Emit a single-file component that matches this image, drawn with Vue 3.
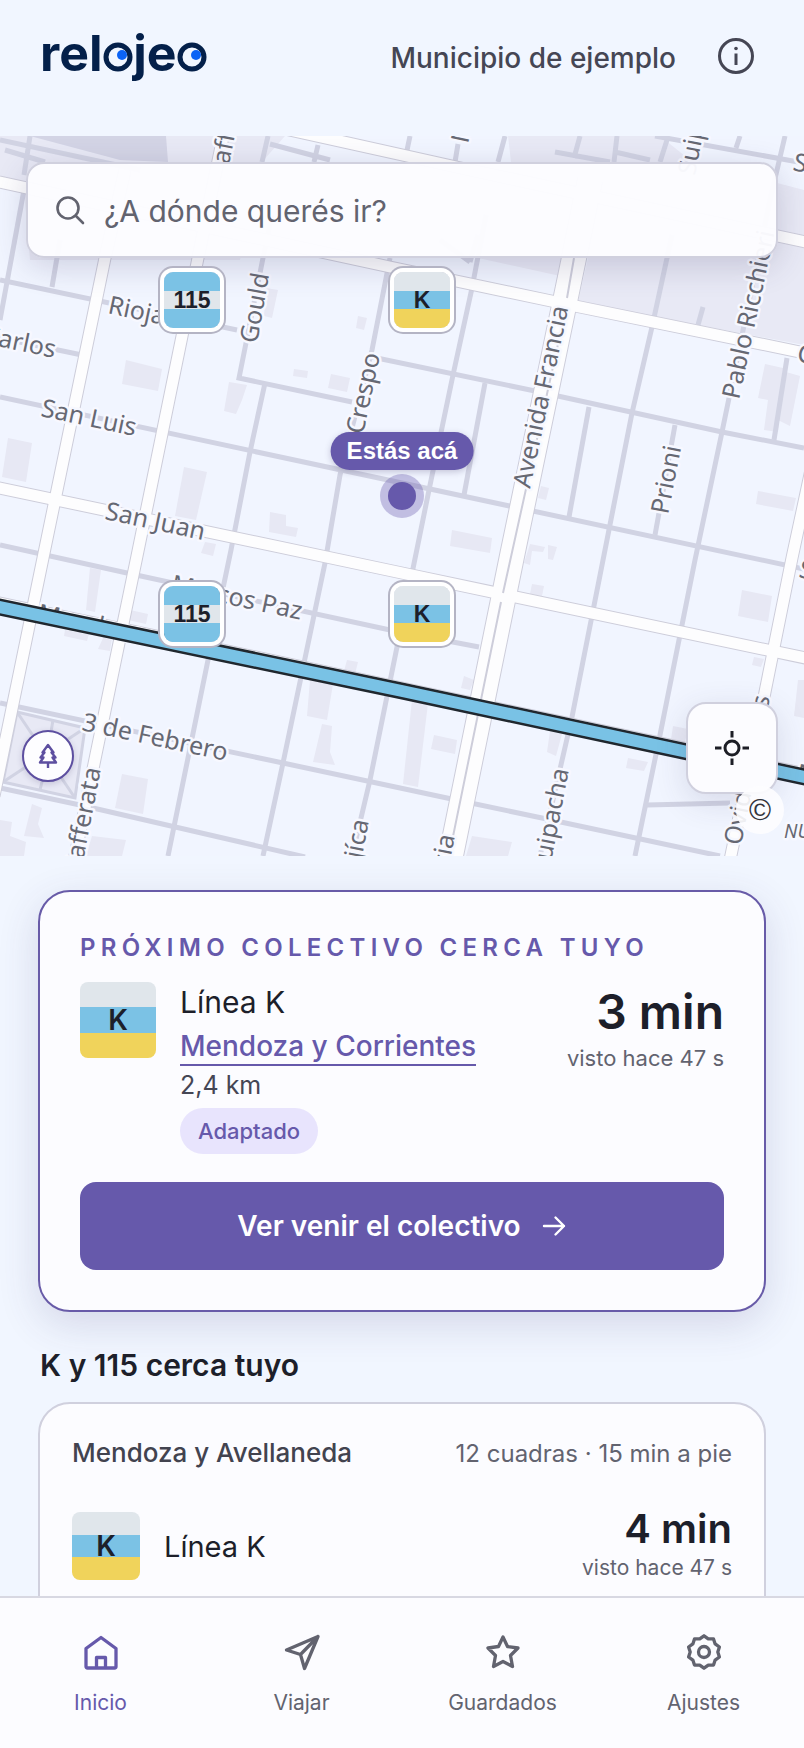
<template>
  <div class="app-shell">
    <main class="content">
      <header class="top-bar">
        <svg class="logo" viewBox="0 0 180 64" role="img" aria-label="relojeo">
          <text x="0" y="47" class="logo-text">relojeo</text>
          <g fill="#f1f6ff" stroke="#04204a" stroke-width="5">
            <circle cx="78" cy="33" r="12" />
            <circle cx="152" cy="33" r="12" />
          </g>
          <circle cx="82" cy="31" r="5" fill="#0b63f6" />
          <circle cx="156" cy="31" r="5" fill="#0b63f6" />
        </svg>
        <div class="top-right">
          <span class="city">Municipio de ejemplo</span>
          <button class="icon-button" aria-label="Información">
            <svg width="40" height="40" viewBox="0 0 40 40" fill="none" stroke="#454654">
              <circle cx="20" cy="20" r="16.500" stroke-width="3" />
              <path d="M20 17.500v11.500" stroke-width="3" />
              <circle cx="20" cy="12.500" r="1.800" fill="#454654" stroke="none" />
            </svg>
          </button>
        </div>
      </header>

      <section class="map">
        <svg class="map-canvas" viewBox="0 136 804 720" preserveAspectRatio="xMidYMid slice">
          <rect x="0" y="136" width="804" height="720" fill="#f1f5ff" />
          <path v-for="d in zones" :key="d" :d="d" fill="#e8e9f5" />
          <path d="M30 136L166 136L168 162L120 160Z" fill="#d3d4e5" />
          <path v-for="d in buildings" :key="d" :d="d" fill="#e7e8f4" />
          <path v-for="d in minorRoads" :key="d" :d="d" class="minor" />
          <path v-for="d in paths" :key="d" :d="d" class="footpath" />
          <path v-for="d in majorRoads" :key="'c' + d" :d="d" class="major-casing" />
          <path :d="avenue" class="avenue-casing" />
          <path v-for="d in majorRoads" :key="'f' + d" :d="d" class="major" />
          <path :d="avenue" class="avenue" />
          <path d="M574 258L567 298M566 308L503 593M501 602L449 856" class="median" />
          <text
            v-for="(s, i) in streets"
            :key="i"
            class="street"
            :class="{ area: s.area }"
            :text-anchor="s.end ? 'end' : 'start'"
            :transform="`translate(${s.x} ${s.y}) rotate(${s.a})`"
          >{{ s.name }}</text>
          <path d="M-10 605L402 691L814 779" stroke="#20272e" stroke-width="17" />
          <path d="M-10 605L402 691L814 779" stroke="#79c2e5" stroke-width="12" />
        </svg>

        <label class="search">
          <svg width="32" height="32" viewBox="0 0 32 32" fill="none" stroke="#62636f" stroke-width="2.600" stroke-linecap="round">
            <circle cx="12" cy="14" r="10.500" />
            <path d="M20 22l7 7" />
          </svg>
          <input type="text" v-model="query" placeholder="¿A dónde querés ir?" aria-label="Destino" />
        </label>

        <div v-for="(p, i) in pins" :key="i" class="pin" :class="'line-' + p.line" :style="place(p)">
          {{ p.line }}
        </div>
        <div class="here-label" :style="place({ x: 402, y: 315 })">Estás acá</div>
        <div class="here-dot" :style="place({ x: 402, y: 360 })"></div>
        <div class="park" :style="place({ x: 48, y: 620 })">
          <svg width="28" height="28" viewBox="0 0 28 28" fill="none" stroke="#5d4fa0" stroke-width="2.400" stroke-linejoin="round">
            <path d="M14 3L8.500 10.500H10.500L6.500 15.500H9.500L6 20.500H22L18.500 15.500H21.500L17.500 10.500H19.500Z" />
            <path d="M14 20.500V26" />
          </svg>
        </div>
        <button class="credits" aria-label="Créditos del mapa">©</button>
        <button class="locate" aria-label="Mi ubicación">
          <svg width="36" height="36" viewBox="0 0 36 36" fill="none" stroke="#1d1e26" stroke-width="3">
            <circle cx="18" cy="18" r="7" />
            <path d="M18 1v6.500M18 28.500v6.500M1 18h6.500M28.500 18h6.500" />
          </svg>
        </button>
      </section>

      <div class="cards">
        <article class="card next-card">
          <p class="eyebrow">PRÓXIMO COLECTIVO CERCA TUYO</p>
          <div class="next-row">
            <div class="badge badge-big line-K">K</div>
            <div class="next-info">
              <span class="line-name">Línea K</span>
              <a href="#" class="stop-link">Mendoza y Corrientes</a>
              <span class="distance">2,4 km</span>
              <span class="chip">Adaptado</span>
            </div>
            <div class="eta">
              <strong>3 min</strong>
              <span>visto hace 47 s</span>
            </div>
          </div>
          <button class="primary">
            Ver venir el colectivo
            <svg width="26" height="24" viewBox="0 0 26 24" fill="none" stroke="#fff" stroke-width="2.400" stroke-linecap="round" stroke-linejoin="round">
              <path d="M3 12h20M14.500 3.500L23 12l-8.500 8.500" />
            </svg>
          </button>
        </article>

        <h2>K y 115 cerca tuyo</h2>

        <article class="card stop-card">
          <div class="stop-head">
            <h3>Mendoza y Avellaneda</h3>
            <span>12 cuadras · 15 min a pie</span>
          </div>
          <div class="stop-row">
            <div class="badge line-K">K</div>
            <span class="stop-line">Línea K</span>
            <div class="eta eta-small">
              <strong>4 min</strong>
              <span>visto hace 47 s</span>
            </div>
          </div>
        </article>
      </div>
    </main>

    <nav class="tab-bar">
      <a v-for="t in tabs" :key="t.name" href="#" class="tab" :class="{ active: t.name === current }" @click.prevent="current = t.name">
        <svg width="40" height="40" viewBox="0 0 40 40" fill="none" stroke="currentColor" stroke-width="3.300" stroke-linejoin="round" stroke-linecap="round">
          <path :d="t.icon" />
        </svg>
        <span>{{ t.name }}</span>
      </a>
    </nav>
  </div>
</template>

<script setup>
import { ref } from "vue";

const query = ref("");
const current = ref("Inicio");

const pins = [
  { line: "115", x: 192, y: 164 },
  { line: "K", x: 422, y: 164 },
  { line: "115", x: 192, y: 478 },
  { line: "K", x: 422, y: 478 },
];

// the map is centred in its box, so pins are measured from the middle
const place = (p) => ({ left: `calc(50% + ${p.x - 402}px)`, top: `${p.y}px` });

// ten-toothed wheel around the hub of the settings icon
const gearPath = () => {
  const points = [];
  for (let i = 0; i < 20; i++) {
    const r = i % 2 ? 13.8 : 16.2;
    const a = (i * Math.PI) / 10 - Math.PI / 2;
    points.push(`${(20 + r * Math.cos(a)).toFixed(2)} ${(20 + r * Math.sin(a)).toFixed(2)}`);
  }
  return `M${points.join("L")}ZM25.5 20a5.5 5.5 0 1 1-11 0a5.5 5.5 0 1 1 11 0Z`;
};

const tabs = [
  { name: "Inicio", icon: "M5 16.500L20 5.500L35 16.500V34.500Q35 36 33.500 36H6.500Q5 36 5 34.500ZM15.500 36V25.500H24.500V36" },
  { name: "Viajar", icon: "M36 4.500L4.500 18L18.500 22.500L22.500 36.500ZM18.500 22.500L36 4.500" },
  { name: "Guardados", icon: "M20 5L24.500 14.500L35 16L27.500 23.500L29.500 34.500L20 29.500L10.500 34.500L12.500 23.500L5 16L15.500 14.500Z" },
  { name: "Ajustes", icon: gearPath() },
];

const zones = [
  "M0 136H285L262 162L240 260H30L24 190L0 175Z",
  "M390 235L478 258L560 276L572 215L400 180Z",
  "M508 136H660L690 160L804 190V345L578 302L588 258L520 240Z",
  "M17 712L85 728L75 798L3 782Z",
];

const buildings = [
  "M126 360L162 369L158 391L122 384Z",
  "M229 382L247 385L242 400L236 414L224 411Z",
  "M184 467L207 472L196 520L175 516Z",
  "M8 438L32 443L26 482L2 477Z",
  "M270 512L286 515L286 526L298 528L296 537L269 532Z",
  "M205 542L216 544L213 556L201 553Z",
  "M294 369L308 371L307 378L293 376Z",
  "M331 374L350 378L347 392L328 388Z",
  "M266 288L278 290L272 318L264 316Z",
  "M358 316L367 318L364 330L356 328Z",
  "M90 568L101 570L95 612L86 610Z",
  "M66 624L90 630L87 641L64 636Z",
  "M104 636L112 638L110 651L98 649Z",
  "M130 610L148 614L146 624L128 620Z",
  "M122 774L148 779L143 814L115 808Z",
  "M310 680L333 684L327 720L307 716Z",
  "M322 724L332 726L330 752L335 765L313 762Z",
  "M347 660L358 662L355 674L344 671Z",
  "M32 804L42 808L38 824L44 838L24 836Z",
  "M0 820L12 822L10 836L26 842L24 856H0Z",
  "M92 836L126 840L122 856H86Z",
  "M452 530L492 538L490 553L450 546Z",
  "M541 486L549 488L546 500L538 498Z",
  "M548 545L557 547L553 560L548 559ZM530 544L545 547L543 552L532 551L530 565L524 563Z",
  "M758 491L796 498L793 511L756 504Z",
  "M765 364L783 368L778 432L764 430L768 400L758 398Z",
  "M786 372L800 376L790 426L778 420Z",
  "M742 590L772 596L768 622L738 616Z",
  "M754 657L764 659L761 667L752 665Z",
  "M412 700L428 703L418 787L403 784Z",
  "M434 735L457 740L455 754L431 749Z",
  "M464 676L474 680L470 690L461 688Z",
  "M550 731L562 734L556 756L547 752Z",
  "M628 758L648 762L644 771L626 768Z",
  "M673 726L688 729L685 742L671 739Z",
  "M472 836L512 842L508 856H466Z",
  "M532 584L544 586L542 596L530 594Z",
  "M798 680L804 680V718L794 716Z",
];

const minorRoads = [
  "M0 280L237 330",
  "M0 338L82 355",
  "M0 397L402 483L804 569",
  "M272 215L263 258L239 378L352 402",
  "M265 383L250 452L231 550L208 660L168 856",
  "M390 258L372 350L340 475L325 563L283 763L263 856",
  "M486 215L472 288L453 375L429 490L397 647L370 780L352 856",
  "M372 357L535 391L722 432L804 448",
  "M485 383L464 495",
  "M589 407L569 517",
  "M672 235L652 327L632 413L605 550L572 717L540 856",
  "M785 136L770 200L722 432L695 560L660 735L635 856",
  "M675 425L655 535",
  "M787 358L774 440",
  "M0 545L127 573L390 630L479 647",
  "M0 703L283 763L447 798L542 818L720 856",
  "M0 788L80 805L305 857",
  "M647 805L730 803",
  "M24 190L0 320",
  "M60 240L52 287",
  "M703 307L698 325",
  "M0 140L140 170M30 136L24 175M5 150L45 162",
  "M268 136L262 162M270 144L330 160M318 145L314 162",
  "M410 136L406 155M505 136L498 162M458 144L455 162",
  "M580 136L574 158M617 136L614 162M555 152L610 162M615 152L650 160M667 140L660 162",
  "M655 136L804 163M740 136L736 148",
  "M440 240L470 262M470 262L478 235",
];

const paths = [
  "M17 712L85 728L75 798L3 782Z",
  "M17 712L75 798M85 728L3 782M53 720L48 750M40 790L46 765",
];

const majorRoads = [
  "M125 170L105 258L43 558L-6 796",
  "M224 132L198 258L137 556L70 880",
  "M812 465L792 558L763 702L730 860",
  "M240 119L470 170L810 243",
  "M-5 181L390 267L575 306L810 354",
  "M-5 487L402 573L810 659",
  "M-5 602L402 688L810 775",
];

const avenue = "M590 180L574 258L512 556L448 870";

const streets = [
  { name: "Rioja", x: 107, y: 313, a: 12 },
  { name: "Carlos", x: 54, y: 358, a: 12, end: true },
  { name: "San Luis", x: 40, y: 416, a: 12 },
  { name: "San Juan", x: 104, y: 519, a: 12 },
  { name: "Gould", x: 257, y: 344, a: -80 },
  { name: "Crespo", x: 363, y: 435, a: -78 },
  { name: "Avenida Francia", x: 530, y: 489, a: -78 },
  { name: "Pablo Ricchieri", x: 739, y: 400, a: -78 },
  { name: "Prioni", x: 668, y: 515, a: -79 },
  { name: "Marcos Paz", x: 170, y: 592, a: 12 },
  { name: "Mendoza", x: 36, y: 621, a: 12 },
  { name: "3 de Febrero", x: 81, y: 730, a: 12 },
  { name: "Cafferata", x: 101, y: 769, a: -79, end: true },
  { name: "Mujíca", x: 369, y: 821, a: -79, end: true },
  { name: "Francia", x: 455, y: 836, a: -79, end: true },
  { name: "Suipacha", x: 569, y: 770, a: -79, end: true },
  { name: "Ovidio Lagos", x: 741, y: 846, a: -79 },
  { name: "afferata", x: 229, y: 165, a: -79 },
  { name: "Moreno", x: 468, y: 144, a: -78 },
  { name: "Suipacha", x: 695, y: 176, a: -79 },
  { name: "Santa Fe", x: 792, y: 170, a: 12 },
  { name: "Córdoba", x: 796, y: 361, a: 12 },
  { name: "San Juan", x: 798, y: 577, a: 12 },
  { name: "Mendoza", x: 795, y: 781, a: 12 },
  { name: "NUEVO", x: 784, y: 838, a: 0, area: true },
];
</script>

<style scoped>
.app-shell {
  height: 100vh;
  display: flex;
  flex-direction: column;
  background: #f1f6ff;
  color: #1d1f2a;
  font-family: Inter, "Liberation Sans", sans-serif;
}

.content {
  flex: 1;
  min-height: 0;
  overflow-y: auto;
  scrollbar-width: none;
}

button {
  border: none;
  cursor: pointer;
  font-family: inherit;
}

/* Header */
.top-bar {
  height: 112px;
  padding: 0 48px 24px 40px;
  display: flex;
  align-items: center;
  justify-content: space-between;
}
.logo {
  width: 180px;
  height: 64px;
}
.logo-text {
  font-size: 50px;
  font-weight: 700;
  fill: #04204a;
}
.top-right {
  display: flex;
  align-items: center;
  gap: 40px;
}
.city {
  padding-top: 4px;
  font-size: 28px;
  font-weight: 500;
  color: #454654;
}
.icon-button {
  display: flex;
  padding: 0;
  background: none;
}

/* Map */
.map {
  position: relative;
  height: 720px;
  overflow: hidden;
}
.map-canvas {
  display: block;
  width: 100%;
  height: 100%;
  fill: none;
}
.minor {
  stroke: #d1d3e3;
  stroke-width: 5;
}
.footpath {
  stroke: #d1d3e3;
  stroke-width: 3;
}
.major-casing {
  stroke: #cdcdda;
  stroke-width: 13;
}
.major {
  stroke: #fdfdfe;
  stroke-width: 11;
}
.avenue-casing {
  stroke: #cdcdda;
  stroke-width: 26;
}
.avenue {
  stroke: #fdfdfe;
  stroke-width: 24;
}
.median {
  stroke: #cdcdda;
  stroke-width: 2;
}
.street {
  font-family: "Noto Sans", sans-serif;
  font-size: 25px;
  fill: #666873;
  stroke: #f7f8ff;
  stroke-width: 5;
  stroke-linejoin: round;
  paint-order: stroke;
}
.street.area {
  font-size: 19px;
  font-style: italic;
}

.search {
  position: absolute;
  top: 26px;
  left: 26px;
  right: 26px;
  height: 96px;
  padding: 0 28px;
  box-sizing: border-box;
  display: flex;
  align-items: center;
  gap: 16px;
  background: rgba(252, 252, 255, 0.97);
  border: 2px solid #d0d0de;
  border-radius: 18px;
  box-shadow: 0 8px 32px rgba(60, 55, 100, 0.2);
}
.search input {
  flex: 1;
  min-width: 0;
  padding: 2px 0 0;
  border: none;
  outline: none;
  background: none;
  font-family: inherit;
  font-size: 30px;
  color: #1d1f2a;
}
.search input::placeholder {
  color: #62636f;
  opacity: 1;
}

.line-K {
  background: linear-gradient(#e0e6eb 33.3%, #7bc2e5 33.3% 66.6%, #f0d35b 66.6%);
}
.line-115 {
  background: linear-gradient(#7bc2e5 33.3%, #e0e6eb 33.3% 66.6%, #7bc2e5 66.6%);
}

.pin {
  position: absolute;
  width: 56px;
  height: 56px;
  transform: translate(-50%, -50%);
  display: flex;
  align-items: center;
  justify-content: center;
  border-radius: 9px;
  box-shadow: 0 0 0 4px #fff, 0 0 0 6px #b4b4c4;
  font-family: "Liberation Sans", Arial, sans-serif;
  font-size: 23px;
  font-weight: 700;
}
.here-label {
  position: absolute;
  transform: translate(-50%, -50%);
  padding: 0 16px;
  border-radius: 19px;
  background: #6659ab;
  box-shadow: 0 2px 6px rgba(60, 50, 100, 0.25);
  color: #fff;
  font-family: "Liberation Sans", Arial, sans-serif;
  font-size: 24px;
  font-weight: 700;
  line-height: 38px;
  white-space: nowrap;
}
.here-dot {
  position: absolute;
  width: 28px;
  height: 28px;
  transform: translate(-50%, -50%);
  border-radius: 50%;
  background: #6659ab;
  box-shadow: 0 0 0 8px rgba(102, 89, 171, 0.35);
}
.park {
  position: absolute;
  width: 48px;
  height: 48px;
  transform: translate(-50%, -50%);
  display: flex;
  align-items: center;
  justify-content: center;
  border: 2px solid #5d4fa0;
  border-radius: 50%;
  background: #fdfdff;
  box-shadow: 0 2px 6px rgba(60, 50, 100, 0.2);
}
.locate {
  position: absolute;
  right: 26px;
  bottom: 62px;
  width: 92px;
  height: 92px;
  display: flex;
  align-items: center;
  justify-content: center;
  border: 2px solid #d0d0de;
  border-radius: 20px;
  background: #fcfcff;
  box-shadow: 0 8px 32px rgba(60, 55, 100, 0.14);
}
.credits {
  position: absolute;
  right: 20px;
  bottom: 22px;
  width: 48px;
  height: 48px;
  padding: 0;
  z-index: 1;
  border-radius: 50%;
  background: rgba(253, 253, 255, 0.9);
  color: #33343c;
  font-family: "Liberation Sans", Arial, sans-serif;
  font-size: 30px;
}

/* Cards */
.cards {
  padding: 34px 38px 40px;
}
.card {
  background: #fcfcff;
  border-radius: 32px;
}
.next-card {
  padding: 40px;
  border: 2px solid #685ba8;
  box-shadow: 0 12px 40px rgba(60, 55, 110, 0.16);
}
.eyebrow {
  margin: 0 0 18px;
  font-size: 24px;
  font-weight: 600;
  line-height: 32px;
  letter-spacing: 0.22em;
  color: #6659ab;
}
.next-row,
.stop-row {
  display: flex;
  gap: 24px;
}
.badge {
  width: 68px;
  height: 68px;
  flex-shrink: 0;
  display: flex;
  align-items: center;
  justify-content: center;
  border-radius: 8px;
  font-size: 28px;
  font-weight: 600;
  line-height: 34px;
}
.badge-big {
  width: 76px;
  height: 76px;
}
.next-info {
  flex: 1;
  display: flex;
  flex-direction: column;
  align-items: flex-start;
}
.line-name {
  font-size: 30px;
  line-height: 40px;
}
.stop-link {
  margin-top: 6px;
  border-bottom: 2px solid #6659ab;
  font-size: 28px;
  font-weight: 500;
  line-height: 36px;
  color: #6659ab;
  text-decoration: none;
}
.distance {
  margin: 4px 0 8px;
  font-size: 25px;
  line-height: 30px;
  color: #454654;
}
.chip {
  padding: 0 18px;
  border-radius: 23px;
  background: #e8e4fd;
  font-size: 22px;
  font-weight: 500;
  line-height: 46px;
  color: #6659ab;
}
.eta {
  display: flex;
  flex-direction: column;
  align-items: flex-end;
  color: #62636f;
}
.eta strong {
  font-size: 48px;
  font-weight: 600;
  line-height: 60px;
  color: #1d1f2a;
}
.eta span {
  font-size: 22px;
  line-height: 32px;
}
.primary {
  width: 100%;
  height: 88px;
  margin-top: 28px;
  display: flex;
  align-items: center;
  justify-content: center;
  gap: 20px;
  border-radius: 16px;
  background: #6659ab;
  color: #fff;
  font-size: 28px;
  font-weight: 600;
}

h2 {
  margin: 34px 2px 18px;
  font-size: 30px;
  font-weight: 600;
  line-height: 38px;
}
.stop-card {
  padding: 32px 32px 64px;
  border: 2px solid #d0d0de;
}
.stop-head {
  display: flex;
  align-items: baseline;
  justify-content: space-between;
  line-height: 34px;
  font-size: 24px;
  color: #62636f;
}
h3 {
  margin: 0;
  font-size: 26px;
  font-weight: 500;
  color: #42434f;
}
.stop-row {
  margin-top: 36px;
  align-items: center;
}
.stop-line {
  flex: 1;
  font-size: 29px;
}
.eta-small strong {
  font-size: 40px;
  line-height: 44px;
}
.eta-small span {
  font-size: 21px;
  line-height: 34px;
}

/* Bottom tabs */
.tab-bar {
  height: 150px;
  display: grid;
  grid-template-columns: repeat(4, 1fr);
  background: #fcfcff;
  border-top: 2px solid #d8d8e2;
}
.tab {
  padding-top: 34px;
  display: flex;
  flex-direction: column;
  align-items: center;
  gap: 18px;
  color: #62636f;
  text-decoration: none;
  font-size: 21px;
  line-height: 26px;
}
.tab.active {
  color: #6659ab;
}
</style>

<style>
body {
  margin: 0;
}
</style>
